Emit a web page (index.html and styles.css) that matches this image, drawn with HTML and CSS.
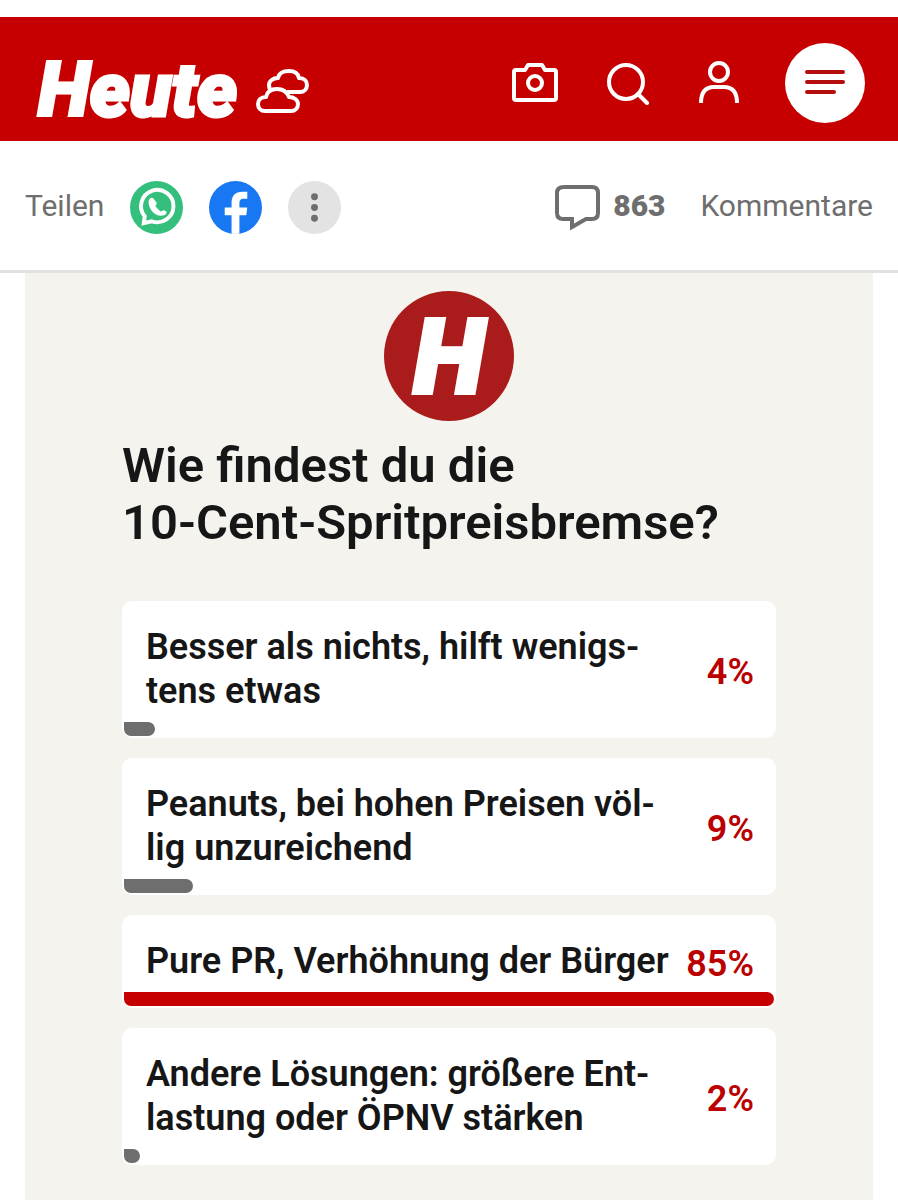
FILE: index.html
```html
<!DOCTYPE html>
<html lang="de">
<head>
    <meta charset="UTF-8">
    <meta name="viewport" content="width=device-width, initial-scale=1.0">
    <title>Heute - Umfrage</title>
    <link rel="stylesheet" href="styles.css">
</head>
<body>
    <!-- Header -->
    <header class="header">
        <a class="logo" href="#">Heute</a>
        <a class="weather" href="#" aria-label="Wetter">
            <svg width="54" height="48" viewBox="0 0 54 48" fill="none" stroke="#fff" stroke-width="4" stroke-linejoin="round">
                <path d="M31 24h13c4 0 7-3 7-7s-3-7-8-7c-1-5-4-7-10-7s-10 2-11 7c-5 0-9 3-9 7 0 3 1 5 3 6"/>
                <path d="M9 43c-4 0-7-3-7-7s3-7 8-7c1-5 5-8 11-8s10 3 12 8c5 0 9 3 9 7s-3 7-7 7z"/>
            </svg>
        </a>
        <nav class="header-nav">
            <a href="#" aria-label="Leserreporter">
                <svg width="46" height="40" viewBox="0 0 46 40" fill="none" stroke="#fff" stroke-width="4" stroke-linejoin="round">
                    <path d="M4 7h9l3-5h14l3 5h9q2 0 2 2v26q0 2-2 2H4q-2 0-2-2V9q0-2 2-2z"/>
                    <circle cx="23" cy="20" r="7"/>
                </svg>
            </a>
            <a href="#" aria-label="Suche">
                <svg width="44" height="44" viewBox="0 0 44 44" fill="none" stroke="#fff" stroke-width="4" stroke-linecap="round">
                    <circle cx="20" cy="21" r="17"/>
                    <path d="M32 33l9 9"/>
                </svg>
            </a>
            <a href="#" aria-label="Profil">
                <svg width="42" height="44" viewBox="0 0 42 44" fill="none" stroke="#fff" stroke-width="4">
                    <circle cx="21" cy="11" r="9"/>
                    <path d="M3 42c0-11 5-16 13-16h10c8 0 13 5 13 16"/>
                </svg>
            </a>
            <button class="menu-button" type="button" aria-label="Menü">
                <svg width="40" height="26" viewBox="0 0 40 26" stroke="#b30d0d" stroke-width="4" stroke-linecap="round">
                    <path d="M2 2h36M2 12h36M2 22h27"/>
                </svg>
            </button>
        </nav>
    </header>

    <!-- Share bar -->
    <div class="share-bar">
        <span class="share-label">Teilen</span>
        <a class="share-icon whatsapp" href="#" aria-label="WhatsApp">
            <svg width="53" height="53" viewBox="0 0 54 54">
                <path d="M14 43l1-7A16.500 16.500 0 1 1 22 41z" fill="none" stroke="#fff" stroke-width="4"/>
                <path d="M19 20c1-3 4-4 5-2l3 4c1 1-1 3-1 4l5 5c1 0 3-2 4-1l2 1c1 1-1 4-3 4-8 2-16-7-15-15z" fill="#fff"/>
            </svg>
        </a>
        <a class="share-icon facebook" href="#" aria-label="Facebook">
            <svg width="53" height="53" viewBox="0 0 54 54">
                <path d="M23 54V35h-7v-8h7v-5c0-7 4-11 11-11h5v7h-4c-3 0-4 2-4 4v5h8l-1 8h-7v19z" fill="#fff"/>
            </svg>
        </a>
        <button class="share-icon more" type="button" aria-label="Mehr">
            <svg width="53" height="53" viewBox="0 0 54 54" fill="#6e6e6e">
                <circle cx="27" cy="16" r="3.500"/>
                <circle cx="27" cy="27" r="3.500"/>
                <circle cx="27" cy="38" r="3.500"/>
            </svg>
        </button>
        <a class="comments" href="#">
            <svg width="46" height="46" viewBox="0 0 46 46" fill="none" stroke="#6e6e6e" stroke-width="4">
                <path d="M9 2h28q6 0 6 6v20q0 6-6 6h-6l-14 8v-8H8q-6 0-6-6V8q0-6 7-6z"/>
            </svg>
            <strong>863</strong>
            <span>Kommentare</span>
        </a>
    </div>

    <!-- Poll -->
    <main class="poll">
        <div class="poll-logo">H</div>
        <h1>Wie findest du die<br>10-Cent-Spritpreisbremse?</h1>
        <ul class="options">
            <li class="option">
                <div class="option-row">
                    <span class="option-text">Besser als nichts, hilft wenigs-<br>tens etwas</span>
                    <span class="percent">4%</span>
                </div>
                <div class="bar" style="width: 4.7%"></div>
            </li>
            <li class="option">
                <div class="option-row">
                    <span class="option-text">Peanuts, bei hohen Preisen völ-<br>lig unzureichend</span>
                    <span class="percent">9%</span>
                </div>
                <div class="bar" style="width: 10.6%"></div>
            </li>
            <li class="option">
                <div class="option-row">
                    <span class="option-text">Pure PR, Verhöhnung der Bürger</span>
                    <span class="percent">85%</span>
                </div>
                <div class="bar bar-top" style="width: 100%"></div>
            </li>
            <li class="option">
                <div class="option-row">
                    <span class="option-text">Andere Lösungen: größere Ent-<br>lastung oder ÖPNV stärken</span>
                    <span class="percent">2%</span>
                </div>
                <div class="bar" style="width: 2.4%"></div>
            </li>
        </ul>
    </main>
</body>
</html>
```
FILE: styles.css
```css
* {
    box-sizing: border-box;
}
body {
    margin: 0;
    padding-top: 17px;
    min-height: 100vh;
    display: flex;
    flex-direction: column;
    font-family: Roboto, "Liberation Sans", sans-serif;
    background: #fff;
    color: #161616;
}
a {
    color: inherit;
    text-decoration: none;
}
button {
    border: none;
    padding: 0;
    cursor: pointer;
}
svg {
    display: block;
}

/* Header */
.header {
    display: flex;
    align-items: center;
    padding: 26px 33px 18px 38px;
    background: #c60000;
    color: #fff;
}
.logo {
    padding-top: 14px;
    font-size: 76px;
    line-height: 66px;
    font-weight: 900;
    font-style: italic;
    -webkit-text-stroke: 3px #fff;
}
.weather {
    margin-left: 19px;
    padding-top: 18px;
}
.header-nav {
    display: flex;
    align-items: center;
    gap: 48px;
    margin-left: auto;
}
.menu-button {
    display: flex;
    align-items: center;
    justify-content: center;
    width: 80px;
    height: 80px;
    margin-left: -3px;
    border-radius: 50%;
    background: #fff;
}

/* Share bar */
.share-bar {
    display: flex;
    align-items: center;
    gap: 26px;
    padding: 40px 25px 36px;
    border-bottom: 3px solid #e2e2e2;
    color: #6e6e6e;
    font-size: 30px;
    line-height: 48px;
}
.share-label,
.comments span,
.comments strong {
    padding-bottom: 4px;
}
.share-icon {
    width: 53px;
    height: 53px;
    border-radius: 50%;
    overflow: hidden;
}
.whatsapp {
    background: #35bf7d;
}
.facebook {
    background: #1877f2;
}
.more {
    background: #e3e3e3;
}
.comments {
    display: flex;
    align-items: center;
    margin-left: auto;
}
.comments strong {
    margin: 0 35px 0 12px;
    font-weight: 900;
}

/* Poll */
.poll {
    flex: 1;
    margin: 0 25px;
    padding: 18px 97px 36px;
    background: #f4f3ee;
}
.poll-logo {
    width: 130px;
    height: 130px;
    margin: 0 auto;
    border-radius: 50%;
    background: #aa1c1c;
    color: #fff;
    font-size: 104px;
    line-height: 134px;
    font-weight: 900;
    font-style: italic;
    text-align: center;
    -webkit-text-stroke: 4px #fff;
}
h1 {
    margin: 16px 0 50px;
    font-size: 49px;
    line-height: 57px;
    font-weight: 600;
}
.options {
    display: flex;
    flex-direction: column;
    gap: 20px;
    margin: 0;
    padding: 0;
    list-style: none;
}
.option {
    padding: 2px;
    border-radius: 10px;
    background: #fff;
}
.option-row {
    display: flex;
    align-items: center;
    justify-content: space-between;
    padding: 22px 20px 9px 22px;
    font-size: 36px;
    line-height: 44px;
    font-weight: 600;
}
.percent {
    padding-top: 6px;
    line-height: 38px;
    color: #ba0000;
}
.bar {
    height: 14px;
    border-radius: 0 8px 8px 8px;
    background: #6e6e6e;
}
.bar-top {
    background: #c60000;
}
```
